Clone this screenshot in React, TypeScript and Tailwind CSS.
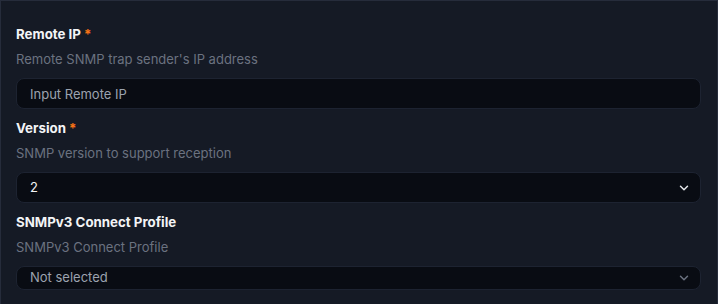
import { ChevronDown } from "lucide-react"

function Field({
  label,
  required,
  description,
  children,
}: {
  label: string
  required?: boolean
  description: string
  children: React.ReactNode
}) {
  return (
    <div className="flex flex-col">
      <div className="text-[13.3px] leading-5 font-bold text-[#f3f4f6]">
        {label}
        {required && <span className="ml-[3px] text-[#f97316]">*</span>}
      </div>
      <p className="mt-[5px] text-[13px] leading-5 text-[#6b7280]">{description}</p>
      <div className="mt-[9px]">{children}</div>
    </div>
  )
}

export default function App() {
  return (
    <div
      className="h-[304px] w-[718px] overflow-hidden border border-b-0 border-[#262c3b] bg-[#151a25] pl-[15px] pr-4 pt-[23px]"
      style={{ fontFamily: "Inter, 'Noto Sans', sans-serif" }}
    >
      <div className="flex flex-col gap-[9px]">
        <Field label="Remote IP" required description="Remote SNMP trap sender's IP address">
          <input
            placeholder="Input Remote IP"
            className="h-[31px] w-full rounded-lg border border-[#1d2331] bg-[#090c13] px-[13px] text-[13px] text-[#e5e7eb] outline-none placeholder:text-[#9ca3af]"
          />
        </Field>

        <Field label="Version" required description="SNMP version to support reception">
          <div className="flex h-[31px] w-full items-center justify-between rounded-lg border border-[#1d2331] bg-[#090c13] pl-[13px] pr-[9px] text-[13px] text-[#f3f4f6]">
            <span>2</span>
            <ChevronDown size={14} strokeWidth={2.5} className="text-[#e5e7eb]" />
          </div>
        </Field>

        <Field label="SNMPv3 Connect Profile" description="SNMPv3 Connect Profile">
          <div className="flex h-[24px] w-full items-center justify-between rounded-lg border border-[#1d2331] bg-[#090c13] pl-[13px] pr-[9px] text-[13px] text-[#9ca3af]">
            <span>Not selected</span>
            <ChevronDown size={14} strokeWidth={2.5} className="text-[#6b7280]" />
          </div>
        </Field>
      </div>
    </div>
  )
}
